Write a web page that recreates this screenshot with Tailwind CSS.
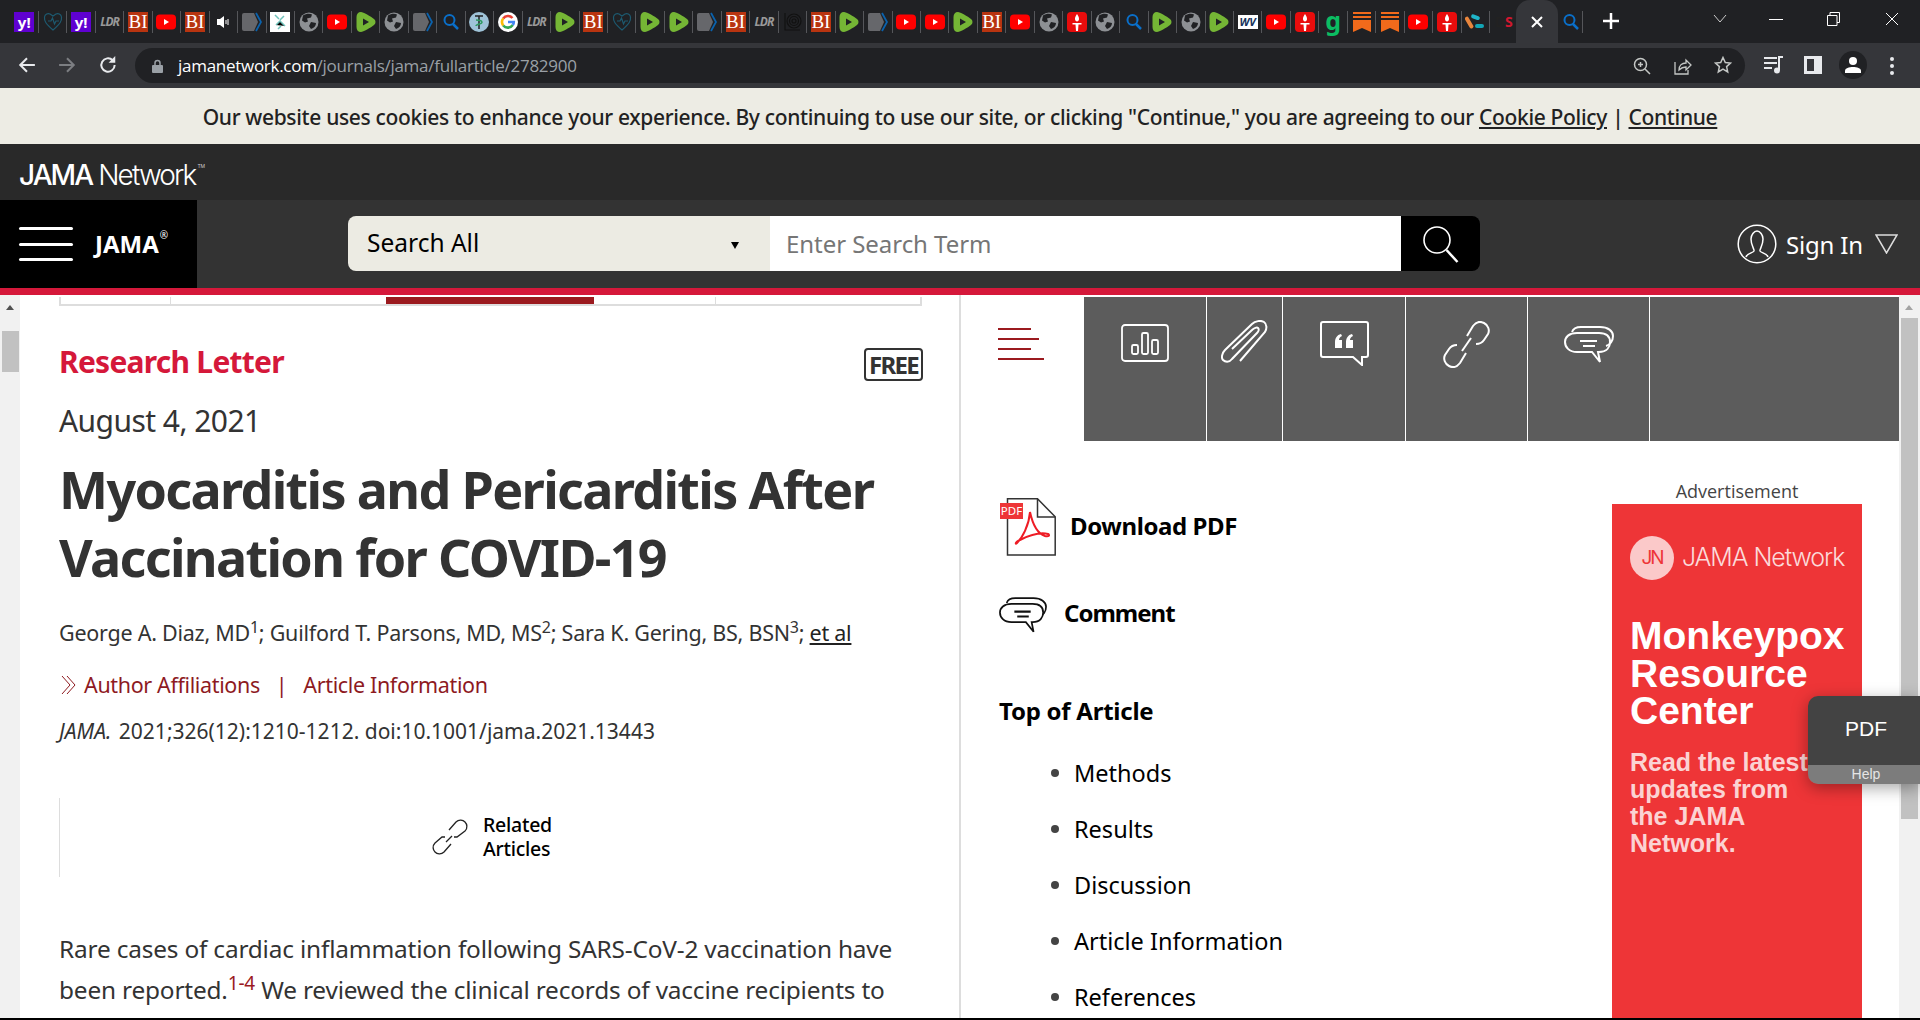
<!DOCTYPE html>
<html lang="en">
<head>
    <meta charset="UTF-8">
    <title>Myocarditis and Pericarditis After Vaccination for COVID-19</title>
    <script src="https://cdn.jsdelivr.net/npm/@tailwindcss/browser@4"></script>
</head>
<body class="w-[1920px] h-[1020px] overflow-hidden flex flex-col relative bg-white font-['Noto_Sans',sans-serif]">

    <!-- shared favicons -->
    <svg class="hidden">
        <symbol id="yt" viewBox="0 0 20 20"><rect y="2.5" width="20" height="15" rx="4" fill="#f00"/><path d="M8 7l5 3-5 3z" fill="#fff"/></symbol>
        <symbol id="rum" viewBox="0 0 20 20"><path fill="#75b635" d="M5 0C2 0 .5 2 .5 5v10c0 3 1.500 5 4.500 5 2 0 10-4.500 13-7 2-1.500 2-4.500 0-6C15 4.500 7 0 5 0z"/><path d="M7 6.500l6 3.500-6 3.500z" fill="#202124"/></symbol>
        <symbol id="globe" viewBox="0 0 20 20"><circle cx="10" cy="10" r="9.500" fill="#8d9094"/><path fill="#202124" d="M4 3.500c3-2 7-2 9-1l-1 3-4 1 1 3-3 1-3-2zM12 10l5 1c0 3-2 5-5 6l-2-3z"/></symbol>
        <symbol id="chev" viewBox="0 0 20 20"><path fill="#66676b" d="M0 3q0-2 2-2h10l4 9-4 9H2q-2 0-2-2z"/><path fill="none" stroke="#0a62ad" stroke-width="1.800" d="M14 1l5 9-5 9"/></symbol>
        <symbol id="find" viewBox="0 0 20 20"><circle cx="8.500" cy="8" r="5" fill="none" stroke="#0a6fc9" stroke-width="2"/><path d="M12 12l5 5" stroke="#0a6fc9" stroke-width="2.500"/></symbol>
        <symbol id="heart" viewBox="0 0 20 20"><path fill="none" stroke="#1d5a70" stroke-width="1.200" d="M10 18C3 12 1 9 1.500 5 2 2 5 1 7 2l3 2 3-2c2-1 5 0 5.500 3 .5 4-1.500 7-8.500 13zM5 9l3 0 1.500-3 2 6 1.500-3h3"/></symbol>
        <symbol id="torch" viewBox="0 0 20 20"><rect width="20" height="20" rx="4" fill="#e90c0c"/><path fill="#fff" d="M10 2c1.500 2 2 3.500 2 5s-1 2.500-2 2.500S8 8.500 8 7s.5-3 2-5zM5.500 11h9v1.500h-3L11 19H9l-.5-6.500h-3z"/></symbol>
        <symbol id="rib" viewBox="0 0 20 20"><path fill="#f26a1b" d="M1 0h18v2H1zM1 4h18v2H1zM1 8h18v12l-9-4-9 4z"/></symbol>
    </svg>

    <!-- tab strip -->
    <div class="h-[43px] bg-[#202124] flex items-start shrink-0 relative">
        <div class="flex items-center pl-[10.500px] mt-[11px] *:w-[28.460px] *:shrink-0 *:h-[22px] *:flex *:items-center *:justify-center *:border-r *:border-[#55565a] [&_svg]:w-5 [&_svg]:h-5">
            <div><span class="w-5 h-5 bg-[#5f01d1] text-white text-[15px] font-bold leading-5 text-center">y!</span></div>
            <div><svg><use href="#heart"/></svg></div>
            <div><span class="w-5 h-5 bg-[#5f01d1] text-white text-[15px] font-bold leading-5 text-center">y!</span></div>
            <div><span class="w-5 text-[#999] text-[12px] font-bold italic leading-5 text-center tracking-[-1px]">LDR</span></div>
            <div><span class="w-5 h-5 bg-[#b83410] text-white text-[19px] leading-5 text-center font-['Liberation_Serif',serif]">BI</span></div>
            <div><svg><use href="#yt"/></svg></div>
            <div><span class="w-5 h-5 bg-[#b83410] text-white text-[19px] leading-5 text-center font-['Liberation_Serif',serif]">BI</span></div>
            <div><svg viewBox="0 0 20 20"><path fill="#fff" d="M4 7h3l4-3v12l-4-3H4z"/><path stroke="#fff" fill="none" d="M13 8v4M15 7v6"/></svg></div>
            <div><svg><use href="#chev"/></svg></div>
            <div><svg viewBox="0 0 20 20"><rect width="20" height="20" fill="#fff"/><path stroke="#6fc2bb" stroke-width="1.500" d="M5 3l4 4M14 4l-4 4M6 13l4-4 5 5M8 17l3-3"/></svg></div>
            <div><svg><use href="#globe"/></svg></div>
            <div><svg><use href="#yt"/></svg></div>
            <div><svg><use href="#rum"/></svg></div>
            <div><svg><use href="#globe"/></svg></div>
            <div><svg><use href="#chev"/></svg></div>
            <div><svg><use href="#find"/></svg></div>
            <div><svg viewBox="0 0 20 20"><circle cx="10" cy="10" r="10" fill="#9fc3d8"/><path stroke="#222" stroke-width="1.500" d="M6 4h8M10 4v13"/><path stroke="#2d9a5f" fill="none" stroke-width="1.500" d="M7 8c4 0 6 1 6 2.500S7 12 7 14"/></svg></div>
            <div><svg viewBox="0 0 20 20"><circle cx="10" cy="10" r="10" fill="#fff"/><g fill="none" stroke-width="2.600"><path stroke="#ea4335" d="M14.500 6A6 6 0 0 0 5.200 6.500"/><path stroke="#fbbc05" d="M5.200 6.500a6 6 0 0 0 0 7"/><path stroke="#34a853" d="M5.200 13.500a6 6 0 0 0 9.600-.5"/><path stroke="#4285f4" d="M14.800 13c.7-1 1-2 1-3H10"/></g></svg></div>
            <div><span class="w-5 text-[#999] text-[12px] font-bold italic leading-5 text-center tracking-[-1px]">LDR</span></div>
            <div><svg><use href="#rum"/></svg></div>
            <div><span class="w-5 h-5 bg-[#b83410] text-white text-[19px] leading-5 text-center font-['Liberation_Serif',serif]">BI</span></div>
            <div><svg><use href="#heart"/></svg></div>
            <div><svg><use href="#rum"/></svg></div>
            <div><svg><use href="#rum"/></svg></div>
            <div><svg><use href="#chev"/></svg></div>
            <div><span class="w-5 h-5 bg-[#b83410] text-white text-[19px] leading-5 text-center font-['Liberation_Serif',serif]">BI</span></div>
            <div><span class="w-5 text-[#999] text-[12px] font-bold italic leading-5 text-center tracking-[-1px]">LDR</span></div>
            <div><svg viewBox="0 0 20 20"><g fill="none" stroke="#111" stroke-width="1.200"><circle cx="12" cy="9" r="7"/><circle cx="12" cy="9" r="4.500"/><circle cx="12" cy="9" r="2"/><path d="M3 1v17h15"/></g></svg></div>
            <div><span class="w-5 h-5 bg-[#b83410] text-white text-[19px] leading-5 text-center font-['Liberation_Serif',serif]">BI</span></div>
            <div><svg><use href="#rum"/></svg></div>
            <div><svg><use href="#chev"/></svg></div>
            <div><svg><use href="#yt"/></svg></div>
            <div><svg><use href="#yt"/></svg></div>
            <div><svg><use href="#rum"/></svg></div>
            <div><span class="w-5 h-5 bg-[#b83410] text-white text-[19px] leading-5 text-center font-['Liberation_Serif',serif]">BI</span></div>
            <div><svg><use href="#yt"/></svg></div>
            <div><svg><use href="#globe"/></svg></div>
            <div><svg><use href="#torch"/></svg></div>
            <div><svg><use href="#globe"/></svg></div>
            <div><svg><use href="#find"/></svg></div>
            <div><svg><use href="#rum"/></svg></div>
            <div><svg><use href="#globe"/></svg></div>
            <div><svg><use href="#rum"/></svg></div>
            <div><span class="w-5 h-[14px] bg-white text-[#16335c] text-[11px] font-bold italic leading-[14px] text-center">WV</span></div>
            <div><svg><use href="#yt"/></svg></div>
            <div><svg><use href="#torch"/></svg></div>
            <div><span class="text-[#0bbd62] text-[25px] font-bold leading-5 -mt-1">g</span></div>
            <div><svg><use href="#rib"/></svg></div>
            <div><svg><use href="#rib"/></svg></div>
            <div><svg><use href="#yt"/></svg></div>
            <div><svg><use href="#torch"/></svg></div>
            <div><svg viewBox="0 0 20 20"><rect x="3" y="-1" width="4" height="13" rx="2" transform="rotate(-30 5 6) translate(-3 4)" fill="#e8853c"/><rect x="6" y="3" width="9" height="4" rx="2" fill="#1fb5c9" transform="rotate(20 10 5)"/><rect x="10" y="12" width="9" height="4" rx="2" fill="#12a5b5"/></svg></div>
            <div class="border-r-0"><span class="w-5 text-[#d1172f] text-[14px] font-bold leading-5 text-center"><span class="text-[#222]">D</span>S</span></div>
        </div>
        <!-- active tab -->
        <div class="absolute left-[1516px] top-0 w-[42px] h-[43px] bg-[#35363a] rounded-t-[14px] flex items-center justify-center">
            <svg class="w-[14px] h-[14px]" viewBox="0 0 14 14"><path stroke="#fff" stroke-width="2" d="M2 2l10 10M12 2L2 12"/></svg>
        </div>
        <div class="absolute left-[1561px] top-[11px] w-[22px] h-[22px] border-r border-[#55565a] flex items-center"><svg class="w-5 h-5"><use href="#find"/></svg></div>
        <svg class="absolute left-[1603px] top-[13px] w-4 h-4" viewBox="0 0 16 16"><path stroke="#fff" stroke-width="2.500" d="M8 0v16M0 8h16"/></svg>
        <svg class="absolute left-[1713px] top-[14px] w-[14px] h-[10px]" viewBox="0 0 14 10"><path fill="none" stroke="#ccc" d="M1 1l6 7 6-7"/></svg>
        <div class="absolute left-[1769px] top-[19px] w-[14px] h-px bg-white"></div>
        <svg class="absolute left-[1827px] top-[12px] w-[13px] h-[14px]" viewBox="0 0 13 14"><path fill="none" stroke="#fff" d="M.5 3.500h9.500v10H.5zM3 3.500V.5h9.500v10H10"/></svg>
        <svg class="absolute left-[1885px] top-[12px] w-[14px] h-[14px]" viewBox="0 0 14 14"><path stroke="#fff" d="M1 1l12 12M13 1L1 13"/></svg>
    </div>

    <!-- toolbar -->
    <div class="h-[45px] bg-[#35363a] flex items-start shrink-0">
        <div class="flex items-center w-[135px] h-[35px] mt-[5px] relative">
            <svg class="absolute left-[18px] top-[8px] w-[18px] h-[18px]" viewBox="0 0 16 16"><path fill="none" stroke="#e8eaed" stroke-width="1.800" d="M15 8H2M8 2L2 8l6 6"/></svg>
            <svg class="absolute left-[58px] top-[8px] w-[18px] h-[18px]" viewBox="0 0 16 16"><path fill="none" stroke="#7c7e82" stroke-width="1.800" d="M1 8h13M8 2l6 6-6 6"/></svg>
            <svg class="absolute left-[98px] top-[7px] w-[20px] h-[20px]" viewBox="0 0 18 18"><path fill="none" stroke="#e8eaed" stroke-width="1.800" d="M15 9a6 6 0 1 1-1.800-4.300"/><path fill="#e8eaed" d="M15.500 1v6h-6z"/></svg>
        </div>
        <div class="w-[1610px] h-[35px] mt-[5px] bg-[#202124] rounded-full flex items-center pl-[17px] relative">
            <svg class="w-[11px] h-[14px] mr-[15px]" viewBox="0 0 11 14"><path fill="#9aa0a6" d="M1 6h9q1 0 1 1v6q0 1-1 1H1q-1 0-1-1V7q0-1 1-1z"/><path fill="none" stroke="#9aa0a6" stroke-width="1.500" d="M3 6V4a2.500 2.500 0 0 1 5 0v2"/></svg>
            <span class="text-[17px] text-white tracking-[-0.28px] font-['Open_Sans',sans-serif]">jamanetwork.com<span class="text-[#9aa0a6]">/journals/jama/fullarticle/2782900</span></span>
            <svg class="absolute left-[1498px] top-[9px] w-[18px] h-[18px]" viewBox="0 0 18 18"><g fill="none" stroke="#c4c7c5" stroke-width="1.500"><circle cx="7.500" cy="7.500" r="6"/><path d="M12 12l5 5M5 7.500h5M7.500 5v5"/></g></svg>
            <svg class="absolute left-[1539px] top-[9px] w-[18px] h-[18px]" viewBox="0 0 18 18"><g fill="none" stroke="#c4c7c5" stroke-width="1.300"><path d="M1 5v12h13v-4"/><path d="M5 13c0-5 3-7 7-7V3l5 5-5 5v-3c-3 0-5 1-7 3z"/></g></svg>
            <svg class="absolute left-[1579px] top-[8px] w-[18px] h-[18px]" viewBox="0 0 18 18"><path fill="none" stroke="#c4c7c5" stroke-width="1.500" d="M9 1.500l2.300 5 5.200.6-3.900 3.500 1.100 5.300L9 13.200l-4.700 2.700 1.100-5.300L1.500 7.100l5.200-.6z"/></svg>
        </div>
        <div class="flex-1 relative h-[35px] mt-[5px]">
            <svg class="absolute left-[19px] top-[8px] w-[20px] h-[18px]" viewBox="0 0 20 18"><path stroke="#e8eaed" stroke-width="1.800" d="M0 2h13M0 7h13M0 12h8"/><path fill="none" stroke="#e8eaed" stroke-width="2" d="M15 14V1h4"/><circle cx="13" cy="14.500" r="3" fill="#e8eaed"/></svg>
            <svg class="absolute left-[59px] top-[8px] w-[18px] h-[18px]" viewBox="0 0 18 18"><path fill="#e8eaed" d="M0 0h18v18H0z"/><path fill="#35363a" d="M3 3h7v12H3z"/></svg>
            <div class="absolute left-[94px] top-[3px] w-[28px] h-[28px] rounded-full bg-[#202124] flex items-center justify-center">
                <svg class="w-[16px] h-[16px]" viewBox="0 0 16 16"><circle cx="8" cy="4" r="4" fill="#fff"/><path fill="#fff" d="M0 16v-2c0-3 4-4 8-4s8 1 8 4v2z"/></svg>
            </div>
            <div class="absolute left-[145px] top-[9px] flex flex-col gap-[3px] *:w-1 *:h-1 *:rounded-full *:bg-[#e8eaed]"><div></div><div></div><div></div></div>
        </div>
    </div>

    <!-- cookie notice -->
    <div class="h-[56px] bg-[#edece4] shrink-0 flex items-center justify-center pt-[3px] text-[21px] text-[#222] font-medium tracking-[-0.33px]">
        <span>Our website uses cookies to enhance your experience. By continuing to use our site, or clicking "Continue," you are agreeing to our <u>Cookie Policy</u> | <u>Continue</u></span>
    </div>

    <!-- network bar -->
    <div class="h-[56px] bg-[#292929] shrink-0 flex items-center pl-[19px] pt-[5px] text-white text-[28px] tracking-[-1.900px] font-['Inter',sans-serif]">
        <span class="font-medium">JAMA</span><span class="font-light ml-[6px]">Network</span><span class="text-[5px] self-start mt-[14px] ml-[2px] text-[#ccc] tracking-normal">TM</span>
    </div>

    <!-- journal nav -->
    <div class="h-[88px] bg-[#333] shrink-0 flex relative">
        <div class="w-[197px] bg-black flex items-center pl-[19px]">
            <div class="flex flex-col gap-[12.500px] *:w-[54px] *:h-[3px] *:bg-white *:rounded-full"><div></div><div></div><div></div></div>
            <span class="text-white text-[24px] font-bold ml-[22px] -mt-px">JAMA</span><span class="text-white text-[10px] self-start mt-[28px] ml-px">®</span>
        </div>
        <div class="ml-[151px] mt-[16px] h-[55px] flex">
            <div class="w-[422px] bg-[#ecebe3] rounded-l-lg flex items-center justify-between pl-[19px] pr-[31px] text-[24.500px] text-black">
                <span class="-mt-px">Search All</span>
                <span class="w-0 h-0 border-x-[4px] border-x-transparent border-t-[7px] border-t-black mt-1"></span>
            </div>
            <div class="w-[631px] bg-white flex items-center pl-[16px] text-[24px] text-[#767676] tracking-[-0.05px]">Enter Search Term</div>
            <div class="w-[79px] bg-black rounded-r-lg flex items-center justify-center">
                <svg class="w-[38px] h-[38px]" viewBox="0 0 38 38"><circle cx="15" cy="15" r="13" fill="none" stroke="#fff" stroke-width="1.600"/><path d="M24.500 25l11 12" stroke="#fff" stroke-width="2.500"/></svg>
            </div>
        </div>
        <div class="absolute left-[1737px] top-[24px] flex items-center text-white text-[24px]">
            <svg class="w-10 h-10" viewBox="0 0 40 40"><g fill="none" stroke="#fff" stroke-width="1.500"><circle cx="20" cy="20" r="18.800"/><path d="M9 33c1-4 7-4 8-6 .5-2-3-5-3-12 0-4 3-8 6-8s6 4 6 8c0 7-3.500 10-3 12 1 2 7 2 8 6"/></g></svg>
            <span class="ml-[9px] tracking-[-0.2px] mt-[2px]">Sign In</span>
            <svg class="ml-[12px] w-[23px] h-[20px]" viewBox="0 0 23 20"><path fill="none" stroke="#ddd" stroke-width="1.500" d="M1 1h21L11.500 19z"/></svg>
        </div>
    </div>
    <div class="h-[7px] bg-[#d5183a] shrink-0"></div>

    <!-- page content -->
    <div class="h-[723px] shrink-0 flex overflow-hidden">
        <!-- left scrollbar -->
        <div class="w-5 bg-[#f1f1f1] shrink-0 relative">
            <div class="absolute left-[6px] top-[10px] w-0 h-0 border-x-[4px] border-x-transparent border-b-[5px] border-b-[#505050]"></div>
            <div class="absolute left-[2px] top-[36px] w-[17px] h-[41px] bg-[#c1c1c1]"></div>
        </div>

        <!-- article -->
        <div class="w-[941px] shrink-0 border-r-2 border-[#dddddd] pl-[39px] pr-[37px] pt-[2px] text-[#333]">
            <div class="h-[9px] border-x-2 border-b-2 border-[#dddddd] flex">
                <div class="w-[110px] border-r border-[#dddddd]"></div>
                <div class="w-[215px]"></div>
                <div class="w-[208px] h-[7px] bg-[#9b1a1f]"></div>
                <div class="w-[122px] border-r border-[#dddddd]"></div>
            </div>
            <div class="mt-[36px] flex justify-between items-start h-10">
                <span class="text-[30px] leading-10 font-bold text-[#d5183a] tracking-[-0.75px]">Research Letter</span>
                <span class="h-[33px] w-[59px] mt-[6px] -mr-px border-2 border-[#333] rounded-[4px] flex items-center justify-center text-[24px] font-bold text-[#333] tracking-[-1.700px]">FREE</span>
            </div>
            <div class="mt-[19px] text-[30px] leading-10 tracking-[-0.55px]">August 4, 2021</div>
            <h1 class="mt-[14px] text-[52px] leading-[68px] font-bold tracking-[-1.650px] whitespace-nowrap">Myocarditis and Pericarditis After<br>Vaccination for COVID-19</h1>
            <div class="mt-[28px] text-[21.500px] leading-7 tracking-[-0.25px] whitespace-nowrap">George A. Diaz, MD<sup class="text-[16px]">1</sup>; Guilford T. Parsons, MD, MS<sup class="text-[16px]">2</sup>; Sara K. Gering, BS, BSN<sup class="text-[16px]">3</sup>; <u class="text-[#222]">et al</u></div>
            <div class="mt-[24px] text-[21.500px] leading-7 text-[#8e1a1f] flex items-center tracking-[-0.36px]">
                <svg class="w-[16px] h-[20px] mr-[7px] ml-[2px]" viewBox="0 0 16 20"><path fill="none" stroke="#8e1a1f" d="M1 1l8 9-8 9M6 1l8 9-8 9"/></svg>
                <span>Author Affiliations</span><span class="mx-[16px]">|</span><span>Article Information</span>
            </div>
            <div class="mt-[18px] text-[21px] leading-7"><i>JAMA.</i><span class="ml-[2px]"> 2021;326(12):1210-1212. doi:10.1001/jama.2021.13443</span></div>
            <div class="mt-[53px] h-[79px] border-l border-[#dddddd] flex items-center pl-[372px]">
                <svg class="w-[37px] h-[37px] mr-[14px]" viewBox="0 0 37 37"><g fill="none" stroke="#222" stroke-width="1.300"><path d="M20 17l-6 6M17 11l7-8c3-3 7-2 9 0s3 6 0 9l-8 6h-3"/><path d="M19 25l-7 8c-3 3-7 2-9 0s-3-6 0-9l7-6h3"/></g></svg>
                <span class="text-[19.500px] leading-6 font-medium text-black tracking-[-0.25px] -mt-px">Related<br>Articles</span>
            </div>
            <p class="mt-[51px] text-[24.400px] leading-[41px] whitespace-nowrap tracking-[-0.18px]">Rare cases of cardiac inflammation following SARS-CoV-2 vaccination have<br>been reported.<sup class="text-[19px] text-[#9b1a1f]">1-4</sup> We reviewed the clinical records of vaccine recipients to</p>
        </div>

        <!-- right panel -->
        <div class="flex-1 flex flex-col pt-[2px]">
            <div class="flex h-[144px] shrink-0">
                <div class="w-[123px] pl-[37px] pt-[31px] flex flex-col gap-[8px]">
                    <div class="w-[33px] h-[2px] bg-[#9b1a1f]"></div>
                    <div class="w-[41px] h-[2px] bg-[#9b1a1f]"></div>
                    <div class="w-[33px] h-[2px] bg-[#9b1a1f]"></div>
                    <div class="w-[46px] h-[2px] bg-[#9b1a1f]"></div>
                </div>
                <div class="flex-1 flex bg-[#5c5c5c] divide-x divide-white *:pt-[24px] *:flex *:justify-center *:items-start">
                    <div class="w-[123px]">
                        <svg class="w-[48px] h-[38px] mt-[3px]" viewBox="0 0 48 38"><g fill="none" stroke="#fff" stroke-width="1.800"><rect x="1" y="1" width="46" height="36" rx="3"/><rect x="11" y="21" width="6" height="9" rx="1.500"/><rect x="21" y="9" width="6" height="21" rx="1.500"/><rect x="31" y="16" width="6" height="14" rx="1.500"/></g></svg>
                    </div>
                    <div class="w-[76px]">
                        <svg class="w-[48px] h-[43px] -mt-px" viewBox="0 0 48 43"><path fill="none" stroke="#fff" stroke-width="2" d="M4 30L31 4c3-3 9-4 12-2s3 7 1 10L19 41M4 30c-3 3-4 8-2 10s6 3 9-1L36 13c2-2 2-4 1-5s-4 0-6 2L11 29"/></svg>
                    </div>
                    <div class="w-[123px]">
                        <svg class="w-[49px] h-[45px]" viewBox="0 0 49 45"><path fill="none" stroke="#fff" stroke-width="2" d="M3 1h43q2 0 2 2v31q0 2-2 2h-4v8l-9-8H3q-2 0-2-2V3q0-2 2-2z"/><path fill="#fff" d="M15 27v-6c0-4 2-7 6-8l1 2c-2 1-3 2-3 4h3v8zM26 27v-6c0-4 2-7 6-8l1 2c-2 1-3 2-3 4h3v8z"/></svg>
                    </div>
                    <div class="w-[122px]">
                        <svg class="w-[48px] h-[47px]" viewBox="0 0 48 47"><g fill="none" stroke="#fff" stroke-width="2"><path d="M28 17L19 30"/><path d="M24 15l6-10c3-4 7-5 11-3s6 7 4 11l-4 6c-2 3-5 4-8 4"/><path d="M23 32l-6 10c-3 4-7 5-11 3s-6-7-4-11l4-6c2-3 5-4 8-4"/></g></svg>
                    </div>
                    <div class="w-[122px]">
                        <svg class="w-[50px] h-[37px] mt-[5px]" viewBox="0 0 50 37"><g fill="none" stroke="#fff" stroke-width="2"><path d="M8 6c1-3 4-5 9-5h19c8 0 13 4 13 9s-3 9-7 10"/><path d="M13 7h22c8 0 11 4 11 9s-3 10-11 10h-1l2 10-8-10H13C5 26 1 21 1 16S5 7 13 7z"/><path d="M16 15h17M19 20h12"/></g></svg>
                    </div>
                    <div class="flex-1"></div>
                </div>
            </div>
            <div class="flex flex-1">
                <!-- sidebar links -->
                <div class="w-[651px] shrink-0 pl-[38px] text-black">
                    <div class="mt-[57px] flex items-center h-[58px]">
                        <svg class="w-[57px] h-[58px]" viewBox="0 0 57 58"><path fill="#fff" stroke="#333" stroke-width="1.500" d="M8.500.8h30l17.700 18V57H8.500z"/><path fill="none" stroke="#333" stroke-width="1.500" d="M38.500 1v18h17.500"/><rect x="1" y="5" width="23" height="16" fill="#ee3537"/><text x="12.500" y="17" text-anchor="middle" fill="#fff" font-family="Noto Sans" font-size="11.500">PDF</text><path fill="none" stroke="#ee1c25" stroke-width="2" d="M31 14c-1 14-8 26-13 31-2 2-2-1 3-3 8-4 20-8 28-6 2 1 1 3-3 2-6-2-12-10-15-24z"/></svg>
                        <span class="ml-[14px] text-[24px] font-bold tracking-[-0.4px] -mt-[3px]">Download PDF</span>
                    </div>
                    <div class="mt-[41px] flex items-center h-[36px]">
                        <svg class="w-[48px] h-[36px]" viewBox="0 0 50 37"><g fill="none" stroke="#111" stroke-width="1.800"><path d="M8 6c1-3 4-5 9-5h19c8 0 13 4 13 9s-3 9-7 10"/><path fill="#fff" d="M13 7h22c8 0 11 4 11 9s-3 10-11 10h-1l2 10-8-10H13C5 26 1 21 1 16S5 7 13 7z"/><path stroke-width="2.200" d="M16 15h17M19 20h12"/></g></svg>
                        <span class="ml-[17px] text-[24px] font-bold tracking-[-1px] -mt-[4px]">Comment</span>
                    </div>
                    <div class="mt-[62px] text-[24px] leading-8 font-bold tracking-[-0.25px]">Top of Article</div>
                    <ul class="mt-[18px] ml-[52px] text-[23.500px] leading-[56px]">
                        <li class="flex items-center gap-[15px]"><span class="w-2 h-2 rounded-full bg-[#444]"></span>Methods</li>
                        <li class="flex items-center gap-[15px]"><span class="w-2 h-2 rounded-full bg-[#444]"></span>Results</li>
                        <li class="flex items-center gap-[15px]"><span class="w-2 h-2 rounded-full bg-[#444]"></span>Discussion</li>
                        <li class="flex items-center gap-[15px]"><span class="w-2 h-2 rounded-full bg-[#444]"></span>Article Information</li>
                        <li class="flex items-center gap-[15px]"><span class="w-2 h-2 rounded-full bg-[#444]"></span>References</li>
                    </ul>
                </div>
                <!-- advertisement -->
                <div class="w-[250px] shrink-0">
                    <div class="mt-[37px] text-center text-[18px] leading-[26px] text-[#444] font-['Open_Sans',sans-serif]">Advertisement</div>
                    <div class="h-[520px] bg-[#ee3537] pt-[32px] pl-[18px] font-['Liberation_Sans',sans-serif] text-white">
                        <div class="flex items-center">
                            <span class="w-11 h-11 rounded-full bg-[#fbc9c9] text-[#ee3537] text-[19px] tracking-[-2px] flex items-center justify-center font-['Inter',sans-serif] shrink-0">JN</span>
                            <span class="ml-2 text-[25px] tracking-[-1.100px] text-[#fbdada] font-light font-['Inter',sans-serif] whitespace-nowrap">JAMA Network</span>
                        </div>
                        <div class="mt-[37px] text-[39px] leading-[37.500px] font-bold whitespace-nowrap">Monkeypox<br>Resource<br>Center</div>
                        <div class="mt-[19px] text-[25px] leading-[27px] font-bold text-[#fbd3d3] whitespace-nowrap">Read the latest<br>updates from<br>the JAMA<br>Network.</div>
                    </div>
                </div>
            </div>
        </div>

        <!-- right scrollbar -->
        <div class="w-[21px] bg-[#f1f1f1] shrink-0 relative">
            <div class="absolute left-[6px] top-[10px] w-0 h-0 border-x-[4px] border-x-transparent border-b-[5px] border-b-[#a3a3a3]"></div>
            <div class="absolute left-[2px] top-[23px] w-[17px] h-[501px] bg-[#c1c1c1]"></div>
        </div>
    </div>
    <div class="h-[2px] bg-black shrink-0"></div>

    <!-- PDF help widget -->
    <div class="absolute right-0 top-[696px] w-[112px] h-[88px] rounded-l-[10px] overflow-hidden shadow-[0_4px_16px_rgba(0,0,0,0.35)] flex flex-col font-['Liberation_Sans',sans-serif]">
        <div class="h-[69px] bg-[#434343] text-white text-[21px] flex items-center justify-center pl-[4px] pb-[4px]">PDF</div>
        <div class="h-[19px] bg-[#7c7c7c] text-[#e5e5e5] text-[14px] flex items-center justify-center pl-[4px]">Help</div>
    </div>
</body>
</html>
